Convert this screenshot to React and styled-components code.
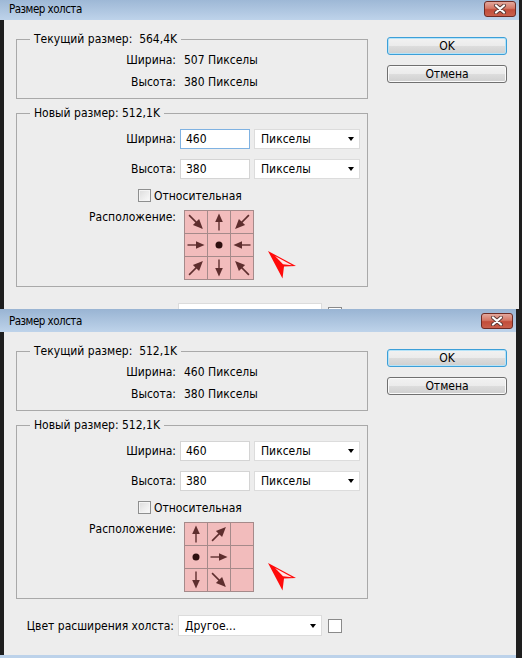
import React from "react";
import styled, { createGlobalStyle } from "styled-components";

const GlobalStyle = createGlobalStyle`
  html, body {
    margin: 0;
    padding: 0;
    background: #1e1e1e;
  }
  body {
    font-family: "DejaVu Sans Condensed", "Liberation Sans", Arial, sans-serif;
    font-size: 12px;
    color: #000;
  }
`;

const Screen = styled.div`
  width: 522px;
  height: 658px;
  overflow: hidden;
  background: #1e1e1e;
`;

const Window = styled.section`
  width: ${(p) => p.$width}px;
  height: ${(p) => p.$height}px;
  margin-top: ${(p) => p.$offset || 0}px;
  display: flex;
  flex-direction: column;
  overflow: hidden;
  box-sizing: border-box;
  border-bottom: ${(p) => (p.$frame ? "3px solid #bcd2ea" : "none")};
`;

const TitleBar = styled.div`
  height: 23px;
  flex-shrink: 0;
  display: flex;
  align-items: center;
  justify-content: space-between;
  padding: 0 3px 0 9px;
  background: linear-gradient(#99b4d3, #bed3ea);
`;

const Title = styled.span`
  font-size: 11.5px;
  letter-spacing: -0.5px;
  color: #000;
`;

const CloseButton = styled.div`
  width: 32px;
  height: 16px;
  box-sizing: border-box;
  border: 1px solid #6e2b24;
  border-radius: 3px;
  display: flex;
  align-items: center;
  justify-content: center;
  background: linear-gradient(#e3a89d 0%, #d47866 45%, #c24d3a 55%, #c9604c 100%);
`;

const Body = styled.div`
  flex: 1;
  margin-left: 4px;
  background: #ededed;
  display: flex;
  align-items: flex-start;
  gap: 19px;
  padding: 12px 0 0 12px;
`;

const LeftColumn = styled.div`
  width: 352px;
  display: flex;
  flex-direction: column;
  gap: 7px;
`;

const Group = styled.fieldset`
  margin: 0;
  min-width: 0;
  border: 1px solid #a9a9a9;
  padding: ${(p) => p.$pad};
`;

const Legend = styled.legend`
  margin-left: 13px;
  padding: 0 4px;
  height: 14px;
  line-height: 14px;
`;

const InfoRow = styled.div`
  display: grid;
  grid-template-columns: 159px auto;
  column-gap: 8px;
  height: 22px;
  align-items: center;
`;

const Label = styled.span`
  text-align: right;
  white-space: nowrap;
`;

const FormRows = styled.div`
  display: flex;
  flex-direction: column;
  gap: 10px;
`;

const FormRow = styled.div`
  display: grid;
  grid-template-columns: 159px 70px 106px;
  column-gap: 4px;
  height: 20px;
  align-items: center;
`;

const TextField = styled.div`
  height: 20px;
  box-sizing: border-box;
  background: #fff;
  border: 1px solid ${(p) => (p.$focused ? "#7fb2e2" : "#d4d4d4")};
  padding-left: 5px;
  display: flex;
  align-items: center;
`;

const Dropdown = styled.div`
  height: ${(p) => p.$h || 20}px;
  box-sizing: border-box;
  background: #fff;
  border: 1px solid #dcdcdc;
  padding: 0 5px 0 6px;
  display: flex;
  align-items: center;
  justify-content: space-between;
`;

const Caret = styled.span`
  width: 0;
  height: 0;
  border-top: 4px solid #000;
  border-left: 3.5px solid transparent;
  border-right: 3.5px solid transparent;
`;

const CheckRow = styled.label`
  display: flex;
  align-items: center;
  gap: 3px;
  margin: 10px 0 0 121px;
  height: 13px;
`;

const CheckBox = styled.span`
  width: 13px;
  height: 13px;
  box-sizing: border-box;
  border: 1px solid #8e8f8f;
  background: linear-gradient(135deg, #dcdcdc, #fbfbfb);
  box-shadow: inset 0 0 0 1px #f4f4f4;
`;

const AnchorRow = styled.div`
  display: flex;
  align-items: flex-start;
  margin-top: 8px;
`;

const AnchorLabel = styled.span`
  width: 159px;
  text-align: right;
  line-height: 14px;
  margin-right: 8px;
`;

const AnchorGrid = styled.div`
  display: grid;
  grid-template-columns: repeat(3, 22px);
  grid-auto-rows: 22px;
  gap: 1px;
  background: #a58a8a;
  border: 1px solid #a58a8a;
`;

const Cell = styled.div`
  background: #f2bcbc;
`;

const Pointer = styled.svg`
  margin: 40px 0 0 13px;
`;

const ColorRow = styled.div`
  display: grid;
  grid-template-columns: 158px 144px 14px;
  column-gap: 4px;
  align-items: center;
  margin-top: 9px;
`;

const Swatch = styled.span`
  width: 14px;
  height: 14px;
  box-sizing: border-box;
  margin-left: 2px;
  background: #fff;
  border: 1px solid #8a8a8a;
`;

const ButtonColumn = styled.div`
  display: flex;
  flex-direction: column;
  gap: 10px;
  padding-top: 5px;
`;

const Button = styled.button`
  width: 120px;
  height: 18px;
  padding: 0;
  font: inherit;
  color: #000;
  border-radius: 3px;
  border: 1px solid ${(p) => (p.$default ? "#3c9fd8" : "#707070")};
  box-shadow: ${(p) => (p.$default ? "inset 0 0 0 1px #b5e3f8" : "inset 0 0 0 1px #fafafa")};
  background: linear-gradient(#f2f2f2 0%, #ebebeb 50%, #dddddd 50%, #cfcfcf 100%);
`;

const ARROW = "#5e2e2e";

function Arrow({ angle }) {
  const diagonal = angle % 90 !== 0;
  const s = diagonal ? 1.15 : 1;
  return (
    <svg width="22" height="22" viewBox="0 0 22 22">
      <g transform={`rotate(${angle} 11 11) translate(11 11) scale(${s}) translate(-11 -11)`}>
        <line x1="2.5" y1="11" x2="12" y2="11" stroke={ARROW} strokeWidth="1.4" />
        <polygon points="19.5,11 11,7.2 11,14.8" fill={ARROW} />
      </g>
    </svg>
  );
}

function Dot() {
  return (
    <svg width="22" height="22" viewBox="0 0 22 22">
      <circle cx="11" cy="11" r="3.5" fill="#2e0f0f" />
    </svg>
  );
}

function Anchor({ cells }) {
  return (
    <AnchorGrid>
      {cells.map((c, i) => (
        <Cell key={i}>
          {c === "dot" ? <Dot /> : c === null ? null : <Arrow angle={c} />}
        </Cell>
      ))}
    </AnchorGrid>
  );
}

// red mouse pointer drawn next to the anchor grid
function RedPointer() {
  return (
    <Pointer width="30" height="29" viewBox="0 0 30 29">
      <polygon points="1,1 29,16 17,16.5 15.5,28.5" fill="#ff0a0a" />
      <polygon points="8,6 25,15.3 16,14.3" fill="#fff" opacity="0.9" />
    </Pointer>
  );
}

function CloseGlyph() {
  return (
    <svg width="14" height="10" viewBox="0 0 14 10">
      <path d="M3 1.5 L11 8.5 M11 1.5 L3 8.5" stroke="#5b3a36" strokeWidth="4" strokeLinecap="round" />
      <path d="M3 1.5 L11 8.5 M11 1.5 L3 8.5" stroke="#fff" strokeWidth="2.2" strokeLinecap="round" />
    </svg>
  );
}

function CanvasSizeDialog({ d }) {
  return (
    <Window $width={d.width} $height={d.height} $offset={d.offset} $frame={d.frame}>
      <TitleBar>
        <Title>Размер холста</Title>
        <CloseButton>
          <CloseGlyph />
        </CloseButton>
      </TitleBar>
      <Body>
        <LeftColumn>
          <Group $pad="3px 0 5px">
            <Legend>Текущий размер:&nbsp; {d.current}</Legend>
            <InfoRow>
              <Label>Ширина:</Label>
              <span>{d.curWidth} Пикселы</span>
            </InfoRow>
            <InfoRow>
              <Label>Высота:</Label>
              <span>{d.curHeight} Пикселы</span>
            </InfoRow>
          </Group>

          <Group $pad="9px 0 6px">
            <Legend>Новый размер: {d.newSize}</Legend>
            <FormRows>
              <FormRow>
                <Label>Ширина:</Label>
                <TextField $focused={d.focused}>460</TextField>
                <Dropdown>
                  Пикселы <Caret />
                </Dropdown>
              </FormRow>
              <FormRow>
                <Label>Высота:</Label>
                <TextField>380</TextField>
                <Dropdown>
                  Пикселы <Caret />
                </Dropdown>
              </FormRow>
            </FormRows>
            <CheckRow>
              <CheckBox />
              Относительная
            </CheckRow>
            <AnchorRow>
              <AnchorLabel>Расположение:</AnchorLabel>
              <Anchor cells={d.anchor} />
              <RedPointer />
            </AnchorRow>
          </Group>

          <ColorRow>
            <Label>Цвет расширения холста:</Label>
            <Dropdown $h={21}>
              Другое... <Caret />
            </Dropdown>
            <Swatch />
          </ColorRow>
        </LeftColumn>

        <ButtonColumn>
          <Button $default>OK</Button>
          <Button>Отмена</Button>
        </ButtonColumn>
      </Body>
    </Window>
  );
}

const dialogs = [
  {
    id: "before",
    width: 519,
    height: 312,
    offset: -3,
    current: "564,4K",
    curWidth: 507,
    curHeight: 380,
    newSize: "512,1K",
    focused: true,
    anchor: [45, -90, 135, 0, "dot", 180, -45, 90, -135],
  },
  {
    id: "after",
    width: 516,
    height: 349,
    frame: true,
    current: "512,1K",
    curWidth: 460,
    curHeight: 380,
    newSize: "512,1K",
    focused: false,
    anchor: [-90, -45, null, "dot", 0, null, 90, 45, null],
  },
];

export default function App() {
  return (
    <>
      <GlobalStyle />
      <Screen>
        {dialogs.map((d) => (
          <CanvasSizeDialog key={d.id} d={d} />
        ))}
      </Screen>
    </>
  );
}
